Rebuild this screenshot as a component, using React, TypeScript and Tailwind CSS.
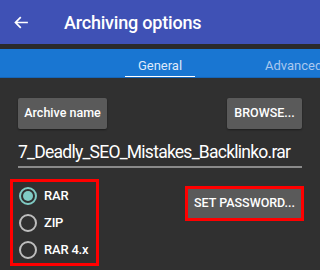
import { useState } from 'react';

const formats = ['RAR', 'ZIP', 'RAR 4.x'];

export default function App() {
  const [fmt, setFmt] = useState('RAR');

  return (
    <div className="w-[320px] h-[270px] overflow-hidden bg-[#303030] font-['Roboto',sans-serif] text-white">
      {/* toolbar */}
      <header className="h-[44px] bg-[#3f51b5] flex items-center">
        <svg className="ml-[13px] w-[17px] h-[17px]" viewBox="0 0 24 24" fill="none" stroke="white" strokeWidth="2.4">
          <path d="M21 12H4M11 4.5L3.5 12l7.5 7.5" />
        </svg>
        <h1 className="ml-[34px] text-[18px] font-medium tracking-[-0.2px]">Archiving options</h1>
      </header>
      <div className="h-[5px] bg-[#2a2a2a]" />

      {/* tabs */}
      <nav className="h-[29px] bg-[#1976d2] relative flex border-b border-[#1565b8]">
        <div className="absolute left-[125px] top-0 w-[70px] h-full flex flex-col items-center">
          <span className="mt-[7px] text-[13px] text-[#dfe9fa]">General</span>
          <span className="mt-auto mb-[1px] w-full h-[2px] bg-white" />
        </div>
        <span className="absolute left-[265px] top-[7px] text-[13px] text-[#a9c8ef] whitespace-nowrap">Advanced</span>
      </nav>

      <main className="px-[18px]">
        <div className="mt-[20px] flex justify-between">
          <button className="h-[31px] w-[89px] rounded-[2px] bg-[#5a5a5a] shadow-[0_1px_2px_rgba(0,0,0,0.4)] text-[12.5px] font-medium">
            Archive name
          </button>
          <button className="h-[31px] w-[75px] rounded-[2px] bg-[#5a5a5a] shadow-[0_1px_2px_rgba(0,0,0,0.4)] text-[12.5px] font-medium">
            BROWSE...
          </button>
        </div>

        <div className="mt-[12px] h-[27px] border-b-2 border-[#8a8a8a] text-[17.5px] tracking-[-0.75px] leading-[22px] whitespace-nowrap">
          7_Deadly_SEO_Mistakes_Backlinko.rar
        </div>
      </main>

      <div className="mt-[11px] flex">
        <div className="ml-[10px] w-[89px] h-[87px] border-[3px] border-[#ff0000] flex flex-col pl-[6px]">
          {formats.map((f) => (
            <label key={f} className="h-[28px] flex items-center cursor-pointer" onClick={() => setFmt(f)}>
              <span className="w-[18px] h-[18px] rounded-full border-2 flex items-center justify-center border-[#bdbdbd] data-[on=true]:border-[#80cbc4]" data-on={fmt === f}>
                {fmt === f && <span className="w-[10px] h-[10px] rounded-full bg-[#80cbc4]" />}
              </span>
              <span className="ml-[7px] text-[13px] font-medium tracking-[-0.2px]">{f}</span>
            </label>
          ))}
        </div>
        <div className="ml-[86px] mt-[7px] w-[119px] h-[35px] border-[3px] border-[#ff0000] p-0">
          <button className="w-full h-full bg-[#5a5a5a] text-[12.5px] font-medium">SET PASSWORD...</button>
        </div>
      </div>
    </div>
  );
}
